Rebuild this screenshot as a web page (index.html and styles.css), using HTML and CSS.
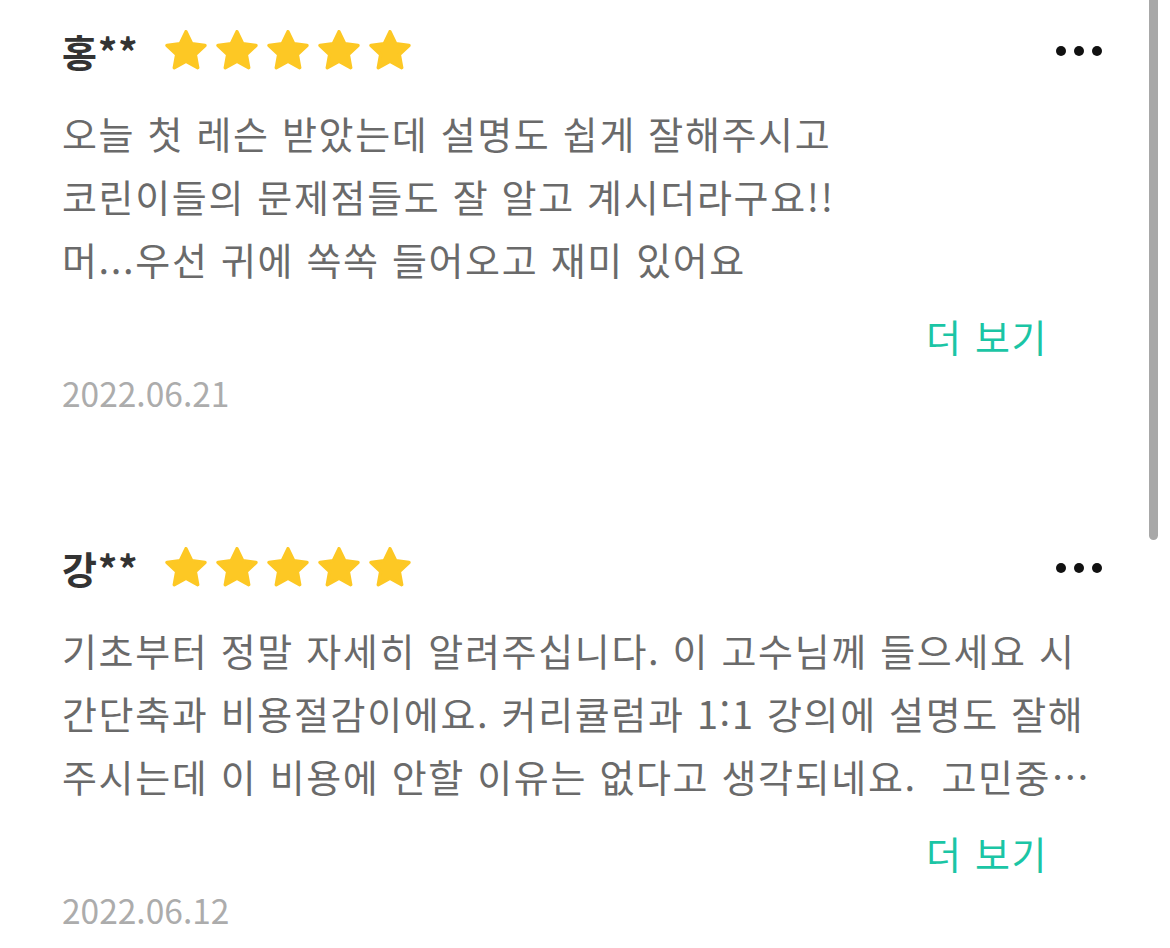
FILE: index.html
```html
<!DOCTYPE html>
<html lang="ko">
<head>
<meta charset="utf-8">
<title>리뷰</title>
<link rel="stylesheet" href="styles.css">
</head>
<body>
<div class="list">
  <article class="review">
    <header class="review-head">
      <span class="name">홍**</span>
      <span class="stars">
        <svg class="star" viewBox="2 2 20 20"><path d="M12 2.8l2.75 5.75 6.3.8-4.6 4.35 1.15 6.25L12 16.9l-5.6 3.05 1.15-6.25-4.6-4.35 6.3-.8z"/></svg>
        <svg class="star" viewBox="2 2 20 20"><path d="M12 2.8l2.75 5.75 6.3.8-4.6 4.35 1.15 6.25L12 16.9l-5.6 3.05 1.15-6.25-4.6-4.35 6.3-.8z"/></svg>
        <svg class="star" viewBox="2 2 20 20"><path d="M12 2.8l2.75 5.75 6.3.8-4.6 4.35 1.15 6.25L12 16.9l-5.6 3.05 1.15-6.25-4.6-4.35 6.3-.8z"/></svg>
        <svg class="star" viewBox="2 2 20 20"><path d="M12 2.8l2.75 5.75 6.3.8-4.6 4.35 1.15 6.25L12 16.9l-5.6 3.05 1.15-6.25-4.6-4.35 6.3-.8z"/></svg>
        <svg class="star" viewBox="2 2 20 20"><path d="M12 2.8l2.75 5.75 6.3.8-4.6 4.35 1.15 6.25L12 16.9l-5.6 3.05 1.15-6.25-4.6-4.35 6.3-.8z"/></svg>
      </span>
      <button class="menu" aria-label="메뉴"><i></i><i></i><i></i></button>
    </header>
    <p class="text">오늘 첫 레슨 받았는데 설명도 쉽게 잘해주시고<br>코린이들의 문제점들도 잘 알고 계시더라구요!!<br>머...우선 귀에 쏙쏙 들어오고 재미 있어요</p>
    <div class="more">더 보기</div>
    <div class="date">2022.06.21</div>
  </article>

  <article class="review">
    <header class="review-head">
      <span class="name">강**</span>
      <span class="stars">
        <svg class="star" viewBox="2 2 20 20"><path d="M12 2.8l2.75 5.75 6.3.8-4.6 4.35 1.15 6.25L12 16.9l-5.6 3.05 1.15-6.25-4.6-4.35 6.3-.8z"/></svg>
        <svg class="star" viewBox="2 2 20 20"><path d="M12 2.8l2.75 5.75 6.3.8-4.6 4.35 1.15 6.25L12 16.9l-5.6 3.05 1.15-6.25-4.6-4.35 6.3-.8z"/></svg>
        <svg class="star" viewBox="2 2 20 20"><path d="M12 2.8l2.75 5.75 6.3.8-4.6 4.35 1.15 6.25L12 16.9l-5.6 3.05 1.15-6.25-4.6-4.35 6.3-.8z"/></svg>
        <svg class="star" viewBox="2 2 20 20"><path d="M12 2.8l2.75 5.75 6.3.8-4.6 4.35 1.15 6.25L12 16.9l-5.6 3.05 1.15-6.25-4.6-4.35 6.3-.8z"/></svg>
        <svg class="star" viewBox="2 2 20 20"><path d="M12 2.8l2.75 5.75 6.3.8-4.6 4.35 1.15 6.25L12 16.9l-5.6 3.05 1.15-6.25-4.6-4.35 6.3-.8z"/></svg>
      </span>
      <button class="menu" aria-label="메뉴"><i></i><i></i><i></i></button>
    </header>
    <p class="text clamp">기초부터 정말 자세히 알려주십니다. 이 고수님께 들으세요 시간단축과 비용절감이에요. 커리큘럼과 1:1 강의에 설명도 잘해주시는데 이 비용에 안할 이유는 없다고 생각되네요.&nbsp; 고민중이시라면 꼭 한번 들어보세요. 후회 없으실 거예요!</p>
    <div class="more">더 보기</div>
    <div class="date">2022.06.12</div>
  </article>
</div>
<div class="scrollbar"></div>
</body>
</html>
```

FILE: styles.css
```css
* { box-sizing: border-box; }
html, body {
  margin: 0;
  padding: 0;
  background: #ffffff;
  overflow: hidden;
}
body {
  font-family: "Noto Sans CJK KR", "Noto Sans", sans-serif;
  width: 1170px;
  height: 948px;
}
.list {
  padding: 0 68px 0 62px;
}
.review {
  display: flex;
  flex-direction: column;
  padding-bottom: 98px;
}
.review-head {
  display: flex;
  align-items: center;
  height: 101px;
}
.name {
  font-size: 38px;
  font-weight: 700;
  color: #333333;
  line-height: 1;
  letter-spacing: 1px;
}
.stars {
  display: flex;
  gap: 9px;
  margin-left: 26px;
}
.star {
  width: 42px;
  height: 42px;
  display: block;
}
.star path {
  fill: #fdc824;
  stroke: #fdc824;
  stroke-width: 1.6;
  stroke-linejoin: round;
}
.menu {
  margin-left: auto;
  display: flex;
  gap: 8px;
  padding: 0;
  border: 0;
  background: none;
}
.menu i {
  width: 10px;
  height: 10px;
  border-radius: 50%;
  background: #111111;
  display: block;
}
.text {
  margin: 0;
  font-size: 38px;
  line-height: 63px;
  color: #6a6a6a;
  letter-spacing: 1.65px;
  word-break: break-all;
}
.clamp {
  display: -webkit-box;
  -webkit-box-orient: vertical;
  -webkit-line-clamp: 3;
  overflow: hidden;
}
.more {
  margin-top: 14px;
  padding-right: 54px;
  text-align: right;
  font-size: 38px;
  line-height: 63px;
  color: #1bc5a5;
  letter-spacing: 1.6px;
}
.date {
  font-size: 33.5px;
  line-height: 52px;
  color: #acacac;
}
.scrollbar {
  position: absolute;
  top: 0;
  left: 1149px;
  width: 9px;
  height: 540px;
  background: #a8a8a8;
  border-radius: 0 0 5px 5px;
}
```
